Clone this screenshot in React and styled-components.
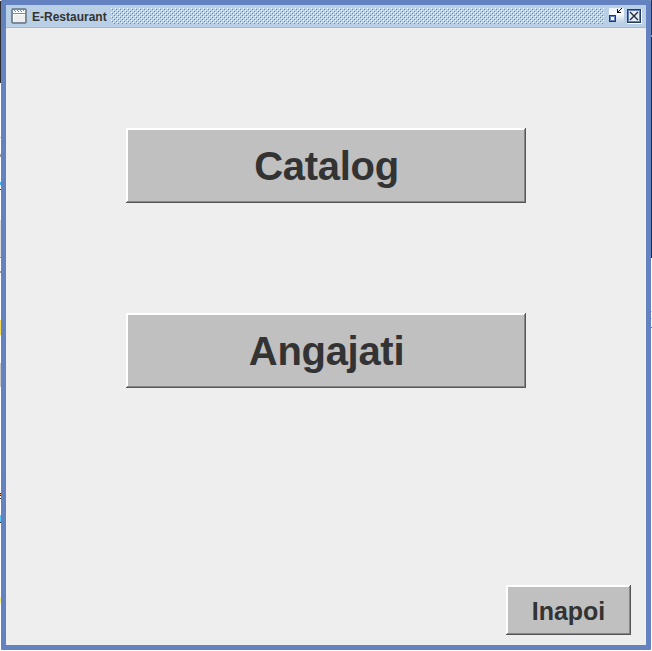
import React from "react";
import styled, { createGlobalStyle } from "styled-components";

const GlobalStyle = createGlobalStyle`
  html, body { margin: 0; background: #fff; overflow: hidden; }
`;

const Desktop = styled.div`
  display: grid;
  grid-template-columns: 1px 650px 1px;
  width: 652px;
  height: 651px;
  background: #fff;
`;

const LeftEdge = styled.div`
  background: linear-gradient(
    #fff 0 1px, #2b2b2e 1px 83px, #fff 83px 137px, #c8c8c8 137px 138px,
    #fff 138px 154px, #999 154px 157px, #fff 157px 182px, #38b8f0 182px 185px,
    #fff 185px 189px, #333 189px 190px, #fff 190px 220px, #ddd 220px 257px,
    #888 257px 258px, #fff 258px 271px, #999 271px 273px, #fff 273px 320px,
    #f5d95a 320px 335px, #fff 335px 363px, #c8c8c8 363px 387px, #fff 387px 493px,
    #222 493px 494px, #e8a050 494px 495px, #222 495px 496px, #fff 496px 498px,
    #222 498px 499px, #fff 499px 515px, #5cc8f5 515px 522px, #222 522px 523px,
    #fff 523px 597px, #f4f08a 597px 603px, #fff 603px
  );
`;

const RightEdge = styled.div`
  background: linear-gradient(
    #2a3050 0 35px, #8a94b8 35px 37px, #20263e 37px 258px, #fff 258px 311px,
    #c5cde0 311px 312px, #fff 312px 318px, #c5cde0 318px 319px,
    #fff 319px 327px, #6f7690 327px 328px, #fff 328px
  );
`;

const Frame = styled.div`
  box-sizing: border-box;
  display: flex;
  flex-direction: column;
  height: 650px;
  border: 5px solid #6382bf;
  border-radius: 1px;
  background: #eee;
`;

const TitleBar = styled.header`
  box-sizing: border-box;
  display: flex;
  align-items: center;
  height: 23px;
  flex: none;
  padding: 0 4px 0 5px;
  border-bottom: 1px solid #a3b8cc;
  background: #b8cfe5;
`;

const Title = styled.span`
  flex: none;
  width: 74px;
  margin: 0 5px;
  padding-top: 2px;
  font: bold 12px/20px "Liberation Sans", Arial, sans-serif;
  color: #333;
  white-space: nowrap;
`;

const Grip = styled.svg`
  display: block;
  flex: none;
  width: 493px;
  height: 16px;
`;

const Controls = styled.div`
  display: flex;
  gap: 2px;
  margin-left: 4px;
`;

const Icon = styled.svg`
  display: block;
  flex: none;
  width: 16px;
  height: 16px;
`;

const Content = styled.main`
  display: flex;
  flex: 1;
  flex-direction: column;
  align-items: center;
  padding-top: 100px;
`;

const sizes = {
  large: { width: 400, height: 75, font: 40, spacing: -0.3, inset: 1 },
  small: { width: 125, height: 50, font: 25, spacing: 0, inset: 0 },
};

const Button = styled.button`
  display: block;
  box-sizing: border-box;
  flex: none;
  width: ${({ $size }) => sizes[$size].width}px;
  height: ${({ $size }) => sizes[$size].height}px;
  padding: 2px 0 0 ${({ $size }) => sizes[$size].inset}px;
  border: 0;
  background: #c0c0c0;
  box-shadow: inset -1px -1px #565656, inset 1px 1px #fff,
    inset -2px -2px #868686, inset 2px 2px #fff;
  color: #333;
  font: bold ${({ $size }) => sizes[$size].font}px "Liberation Sans", Arial, sans-serif;
  letter-spacing: ${({ $size }) => sizes[$size].spacing}px;
`;

const Menu = styled.nav`
  display: flex;
  flex-direction: column;
  gap: 110px;
`;

const Footer = styled.footer`
  display: flex;
  align-self: stretch;
  justify-content: flex-end;
  margin-top: auto;
  padding: 0 15px 10px 0;
`;

function WindowIcon() {
  return (
    <Icon viewBox="0 0 16 16" shapeRendering="crispEdges">
      <path fill="#7a8a99" d="M1 0h14v1h1v14h-1v1H1v-1H0V1h1z" />
      <path fill="#fff" d="M2 2h12v3H2z" />
      <path fill="#eee" d="M2 6h12v8H2z" />
      <path fill="#fff" d="M2 6h12v1H2zM2 6h1v8H2z" />
      <path
        fill="#6382bf"
        d="M3 2h1v1H3zM6 2h1v1H6zM9 2h1v1H9zM12 2h1v1h-1zM4 3h1v1H4zM7 3h1v1H7zM10 3h1v1h-1z"
      />
    </Icon>
  );
}

function RestoreIcon() {
  return (
    <Icon viewBox="0 0 16 16" shapeRendering="crispEdges">
      <defs>
        <linearGradient id="shine" x2="0" y2="1">
          <stop stopColor="#e8f0f8" />
          <stop offset=".35" stopColor="#fff" />
          <stop offset="1" stopColor="#b8cfe5" />
        </linearGradient>
      </defs>
      <path fill="url(#shine)" d="M1 0h15v15H1z" />
      <path fill="#243a66" d="M1 7h7v7H1z" />
      <path fill="#6382bf" d="M2 8h5v5H2z" />
      <path fill="#fff" d="M3 9h3v3H3z" />
      <path fill="#111" d="M9 1h1v3h3v1H9zM10 3h1V2h1V1h1V0h1v1h-1v1h-1v1h-1v1h-1z" />
    </Icon>
  );
}

function CloseIcon() {
  return (
    <Icon viewBox="0 0 16 16" shapeRendering="crispEdges">
      <path fill="#fff" d="M1 1h15v15H1z" />
      <path fill="#243a66" d="M1 1h14v14H1z" />
      <path fill="#6382bf" d="M2 2h12v12H2z" />
      <path fill="#e4edf6" d="M3 3h10v10H3z" />
      <g shapeRendering="auto">
        <path fill="none" stroke="#222c40" strokeWidth="1.4" d="M4 4l8 8M12 4l-8 8" />
      </g>
    </Icon>
  );
}

function TitleGrip() {
  return (
    <Grip viewBox="0 0 493 16" shapeRendering="crispEdges" aria-hidden="true">
      <defs>
        <pattern id="bumps" width="4" height="4" patternUnits="userSpaceOnUse">
          <path fill="#fff" d="M0 0h1v1H0zM2 2h1v1H2z" />
          <path fill="#6382bf" d="M1 1h1v1H1zM3 3h1v1H3z" />
        </pattern>
      </defs>
      <rect width="493" height="16" fill="url(#bumps)" />
    </Grip>
  );
}

export default function App() {
  return (
    <>
      <GlobalStyle />
      <Desktop>
        <LeftEdge />
        <Frame>
          <TitleBar>
            <WindowIcon />
            <Title>E-Restaurant</Title>
            <TitleGrip />
            <Controls>
              <RestoreIcon />
              <CloseIcon />
            </Controls>
          </TitleBar>
          <Content>
            <Menu>
              <Button $size="large">Catalog</Button>
              <Button $size="large">Angajati</Button>
            </Menu>
            <Footer>
              <Button $size="small">Inapoi</Button>
            </Footer>
          </Content>
        </Frame>
        <RightEdge />
      </Desktop>
    </>
  );
}
